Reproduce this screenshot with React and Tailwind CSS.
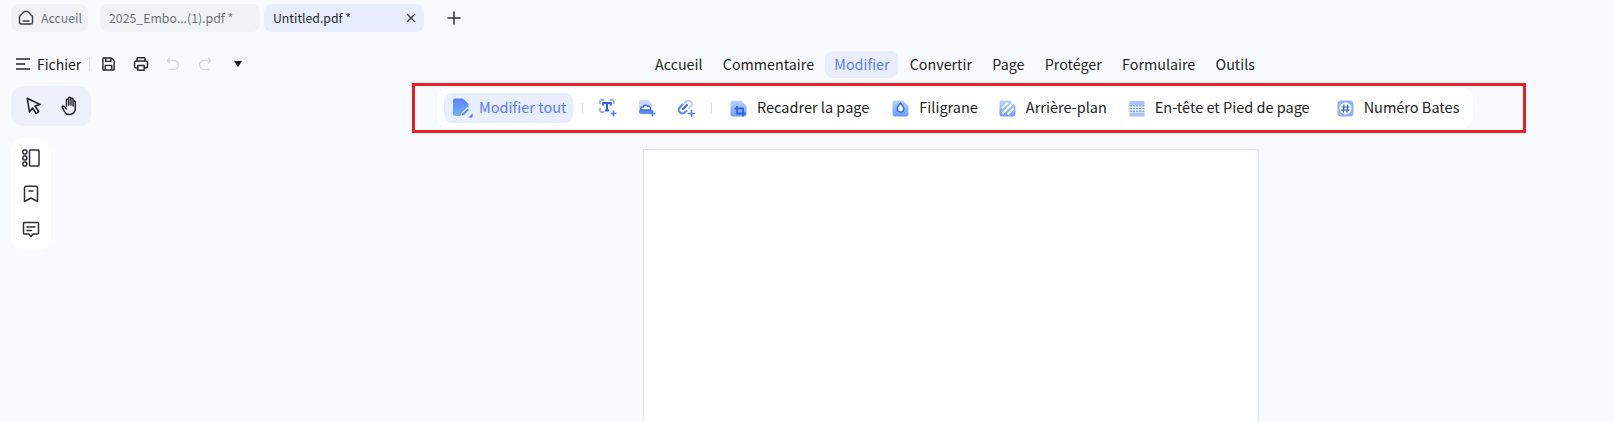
const FONT = "font-['Noto_Sans_CJK_SC','Noto_Sans',sans-serif]";

function HomeIcon() {
  return (
    <svg width="16" height="16" viewBox="0 0 16 16" fill="none" stroke="#3b3f46" strokeWidth="1.4" strokeLinejoin="round" strokeLinecap="round">
      <path d="M1.500 6.500 5.500 2.300c1.400-1.100 3.600-1.100 5 0l4 4.200v6c0 .9-.6 1.500-1.500 1.500H3c-.9 0-1.500-.6-1.500-1.500Z" />
      <path d="M5 11h6" />
    </svg>
  );
}

function Plus() {
  return (
    <svg width="16" height="16" viewBox="0 0 16 16" stroke="#2c2f36" strokeWidth="1.5">
      <path d="M8 1.500v13M1.500 8h13" />
    </svg>
  );
}

function Close() {
  return (
    <svg width="10" height="10" viewBox="0 0 10 10" stroke="#2c2f36" strokeWidth="1.200">
      <path d="M1 1l8 8M9 1 1 9" />
    </svg>
  );
}

function Menu() {
  return (
    <svg width="16" height="14" viewBox="0 0 16 14" stroke="#24272d" strokeWidth="1.500">
      <path d="M1 2h14M1 7h9M1 12h14" />
    </svg>
  );
}

function Save() {
  return (
    <svg width="15" height="16" viewBox="0 0 16 16" fill="none" stroke="#24272d" strokeWidth="1.500" strokeLinejoin="round">
      <path d="M2 2.500c0-.5.400-.9.900-.9H11l3 3v8.900c0 .5-.4.900-.9.900H2.900a.9.900 0 0 1-.9-.9Z" />
      <path d="M5 1.800v3.400h5.500V1.800M4.500 14.200V9.500h7v4.700" />
    </svg>
  );
}

function Printer() {
  return (
    <svg width="16" height="16" viewBox="0 0 16 16" fill="none" stroke="#24272d" strokeWidth="1.500" strokeLinejoin="round">
      <path d="M4 5V2.500c0-.5.300-.8.800-.8h6.400c.5 0 .8.300.8.800V5" />
      <rect x="1.500" y="5" width="13" height="7" rx="2" />
      <rect x="4.800" y="9.500" width="6.400" height="4.800" fill="#f9fafd" />
    </svg>
  );
}

function Undo({ flip }) {
  return (
    <svg width="14" height="14" viewBox="0 0 14 14" fill="none" stroke="#d5d7dc" strokeWidth="1.300" strokeLinecap="round" strokeLinejoin="round" className={flip ? "-scale-x-100" : ""}>
      <path d="M3.500 1 1.500 3.500 3.500 6" />
      <path d="M1.700 3.500H8a4.300 4.300 0 0 1 0 8.800H3" />
    </svg>
  );
}

function Pointer() {
  return (
    <svg width="15" height="18" viewBox="0 0 15 18" fill="none" stroke="#24272d" strokeWidth="1.600" strokeLinejoin="round">
      <path d="M1.200 1.200 14 7.500l-5 1.500 3.700 5.500-2.500 2-3.700-5.500L3.500 15Z" />
    </svg>
  );
}

function Hand() {
  return (
    <svg width="18" height="20" viewBox="0 0 18 20" fill="none" stroke="#24272d" strokeWidth="1.500" strokeLinecap="round" strokeLinejoin="round">
      <path d="M5.500 10V4a1.100 1.100 0 0 1 2.200 0v5M7.700 9V2.300a1.100 1.100 0 0 1 2.200 0V9M9.900 9V3.300a1.100 1.100 0 0 1 2.200 0V10M12.100 6a1.100 1.100 0 0 1 2.200 0v7a5.500 5.500 0 0 1-5.500 5.500H8c-2.200 0-3.300-1-4.300-2.700L1.300 11.500c-.5-1 .8-2.100 1.800-1.200L5.500 13" />
    </svg>
  );
}

function Pages() {
  return (
    <svg width="18" height="18" viewBox="0 0 18 18" fill="none" stroke="#2c2f36" strokeWidth="1.500">
      <rect x="7.500" y="1" width="9.500" height="16" rx="1" />
      <rect x="1" y="1" width="3.800" height="4" rx="1.200" />
      <rect x="1" y="7" width="3.800" height="4" rx="1.200" />
      <rect x="1" y="13" width="3.800" height="4" rx="1.200" />
    </svg>
  );
}

function Bookmark() {
  return (
    <svg width="16" height="18" viewBox="0 0 16 18" fill="none" stroke="#2c2f36" strokeWidth="1.500" strokeLinejoin="round">
      <path d="M1.500 3c0-1 .7-1.700 1.700-1.700h9.600c1 0 1.700.7 1.700 1.700v13.500L8 13l-6.500 3.500Z" />
      <path d="M5.500 6h5" />
    </svg>
  );
}

function Comment() {
  return (
    <svg width="18" height="18" viewBox="0 0 18 18" fill="none" stroke="#2c2f36" strokeWidth="1.500" strokeLinejoin="round" strokeLinecap="round">
      <path d="M2.500 1.500h13c.6 0 1 .4 1 1V12c0 .6-.4 1-1 1H11l-2 2.500L7 13H2.500c-.6 0-1-.4-1-1V2.500c0-.6.400-1 1-1Z" />
      <path d="M5 6h8M5 9.500h4.500" />
    </svg>
  );
}

function EditAll() {
  return (
    <svg width="21" height="20" viewBox="0 0 21 20">
      <defs>
        <linearGradient id="ea" x1="0" y1="0" x2="0" y2="1">
          <stop offset="0" stopColor="#5f80fb" />
          <stop offset="1" stopColor="#6cb2fb" />
        </linearGradient>
      </defs>
      <path d="M1 2.500C1 1.400 1.900.5 3 .5h8L16.500 6v3L9 18H3c-1.100 0-2-.9-2-2Z" fill="url(#ea)" />
      <path d="M9.500 15.500 15.500 9.800l2.600 2.200-6 5.600-3 .5Z" fill="#5f8bfb" stroke="#e8eefe" strokeWidth="1.200" />
      <path d="M20.500 15.500v4h-4Z" fill="#3f74f7" />
    </svg>
  );
}

function Corner() {
  return <path d="M14.500 11.500v6M11.500 14.500h6" stroke="#4f83f8" strokeWidth="1.700" />;
}

function AiText() {
  return (
    <svg width="19" height="18" viewBox="0 0 19 18" fill="none">
      <path d="M1 5V2.500C1 1.700 1.700 1 2.500 1H5M11 1h2.500c.8 0 1.500.7 1.500 1.500V5M1 9v2.500c0 .8.700 1.500 1.500 1.500H5" stroke="#8fb0fa" strokeWidth="1.800" />
      <path d="M4.200 6.500V4h7.600v2.500M8 4v7.500M6 11.500h4" stroke="#2f62e0" strokeWidth="2" />
      <Corner />
    </svg>
  );
}

function AiImage() {
  return (
    <svg width="19" height="18" viewBox="0 0 19 18" fill="none">
      <path d="M1 3a2 2 0 0 1 2-2h7l4 4v6H1Z" fill="#c9d9fd" />
      <path d="M1 11h13.500v2a2 2 0 0 1-2 2H3a2 2 0 0 1-2-2Z" fill="#5f8bfb" />
      <path d="M3 11c-1-2 .5-3.500 2-3 .5-2 3.500-2.500 4.500-.5 1-1 3.500 0 3 3.500Z" fill="#fff" stroke="#3568e0" strokeWidth="1.400" strokeLinejoin="round" />
      <Corner />
    </svg>
  );
}

function AiLink() {
  return (
    <svg width="19" height="18" viewBox="0 0 19 18" fill="none" strokeLinecap="round">
      <path d="M7.500 4 9.500 2.300a3.300 3.300 0 0 1 4.500 4.700L12 9" stroke="#bccffc" strokeWidth="2.200" />
      <path d="M5.500 5.500 2.800 8.200a3.600 3.600 0 0 0 5.200 5L9.500 12" stroke="#5f8bfb" strokeWidth="2.200" />
      <path d="M6 10 10 6" stroke="#2f62e0" strokeWidth="2" />
      <Corner />
    </svg>
  );
}

function Doc({ children, id }) {
  return (
    <svg width="17" height="17" viewBox="0 0 17 17" fill="none">
      <defs>
        <linearGradient id={id} x1="0" y1="0" x2="0" y2="1">
          <stop offset="0" stopColor="#bfd3fd" />
          <stop offset="1" stopColor="#6a9bfa" />
        </linearGradient>
      </defs>
      <path d="M.5 3a2.500 2.500 0 0 1 2.500-2.500h8L16.500 6v8a2.500 2.500 0 0 1-2.500 2.500H3A2.500 2.500 0 0 1 .5 14Z" fill={`url(#${id})`} />
      {children}
    </svg>
  );
}

function Crop() {
  return (
    <Doc id="crop">
      <path d="M7 6v7.500h8.500M4.500 8.500H13V16.500" stroke="#2f62e0" strokeWidth="1.800" />
    </Doc>
  );
}

function Drop() {
  return (
    <Doc id="drop">
      <path d="M8.500 3c2.200 2.800 3.300 4.300 3.300 5.800a3.300 3.300 0 0 1-6.600 0C5.200 7.300 6.300 5.800 8.500 3Z" fill="#fff" stroke="#2f6ef0" strokeWidth="1.500" />
    </Doc>
  );
}

function Stripes() {
  return (
    <Doc id="stripes">
      <path d="M3 8.500 8.500 3M3.500 13.500 13.500 3.500M8.500 14.500 14.500 8.500" stroke="#fff" strokeWidth="2" />
    </Doc>
  );
}

function HeaderFooter() {
  return (
    <svg width="16" height="17" viewBox="0 0 16 17">
      <rect x="0.500" y="1" width="15" height="4" fill="#a9c3fb" />
      <path d="M.5 5.800h15" stroke="#5f8bfb" strokeWidth="1.200" strokeDasharray="2.500 .7" />
      <path d="M.5 8.500h15" stroke="#5f8bfb" strokeWidth="1.200" strokeDasharray="2.500 .7" />
      <path d="M.5 11.200h15" stroke="#5f8bfb" strokeWidth="1.200" strokeDasharray="2.500 .7" />
      <rect x="0.500" y="12.500" width="15" height="4" fill="#a9c3fb" />
    </svg>
  );
}

function Hash() {
  return (
    <svg width="17" height="17" viewBox="0 0 17 17" fill="none">
      <rect x="0.500" y="0.500" width="16" height="16" rx="3.500" fill="#8fb0fa" />
      <circle cx="8.500" cy="8.500" r="6" fill="#fff" />
      <path d="M7 4.500 6.300 12.500M10.700 4.500 10 12.500M4.500 7h8M4.300 10.200h8" stroke="#2f62e0" strokeWidth="1.200" />
    </svg>
  );
}

function Tabs() {
  return (
    <div className="flex h-[36px] items-end pl-[11px] text-[12.3px]">
      <div className="mb-[4px] flex h-[28px] w-[77px] items-center gap-[7px] rounded-[8px] bg-[#f1f2f6] pl-[7px] text-[#70747d]">
        <HomeIcon />
        <span>Accueil</span>
      </div>
      <div className="mb-[4px] ml-[12px] flex h-[28px] w-[160px] items-center rounded-[8px] bg-[#f1f2f6] pl-[9px] text-[#70747d]">
        2025_Embo...(1).pdf *
      </div>
      <div className="mb-[4px] ml-[4px] flex h-[28px] w-[160px] items-center justify-between rounded-[8px] bg-[#e8eefe] pl-[9px] pr-[8px] text-[#24272d]">
        <span>Untitled.pdf *</span>
        <Close />
      </div>
      <div className="mb-[10px] ml-[22px] flex h-[16px] items-center">
        <Plus />
      </div>
    </div>
  );
}

function QuickBar() {
  return (
    <div className="flex h-[28px] items-center pl-[15px] text-[14px] text-[#1c1e23]">
      <Menu />
      <span className="ml-[6px]">Fichier</span>
      <span className="ml-[8px] h-[14px] w-px bg-[#d9dbe0]" />
      <span className="ml-[11px] flex"><Save /></span>
      <span className="ml-[17px] flex"><Printer /></span>
      <span className="ml-[17px] flex"><Undo /></span>
      <span className="ml-[18px] flex"><Undo flip /></span>
      <span className="ml-[22px] h-0 w-0 border-x-[4px] border-t-[6px] border-x-transparent border-t-[#1c1e23]" />
    </div>
  );
}

function Tool({ icon, label, gap = "ml-[10px]" }) {
  return (
    <div className="flex items-center">
      {icon}
      <span className={`${gap} pb-[2px]`}>{label}</span>
    </div>
  );
}

function MainNav() {
  const items = ["Accueil", "Commentaire", "Modifier", "Convertir", "Page", "Protéger", "Formulaire", "Outils"];
  return (
    <div className="flex h-[28px] w-[600px] items-center justify-between text-[14.3px] text-[#1c1e23]">
      {items.map((t) =>
        t === "Modifier" ? (
          <span key={t} className="-mx-[9px] flex h-[27px] items-center rounded-[8px] bg-[#e8eefe] px-[9px] text-[#5b7cfa]">{t}</span>
        ) : (
          <span key={t}>{t}</span>
        )
      )}
    </div>
  );
}

function EditBar() {
  return (
    <div className="flex h-[40px] w-[1036px] items-center rounded-[12px] bg-white pl-[7px] text-[14.5px] text-[#1c1e23]">
      <div className="flex h-[30px] w-[129px] items-center rounded-[8px] bg-[#e8eefe] pl-[8px] text-[#5b7cfa]">
        <EditAll />
        <span className="ml-[6px] pb-[2px]">Modifier tout</span>
      </div>
      <span className="ml-[9px] h-[10px] w-px bg-[#d4d6db]" />
      <span className="ml-[16px] flex"><AiText /></span>
      <span className="ml-[20px] flex"><AiImage /></span>
      <span className="ml-[20px] flex"><AiLink /></span>
      <span className="ml-[15px] h-[10px] w-px bg-[#d4d6db]" />
      <div className="ml-[18px]"><Tool icon={<Crop />} label="Recadrer la page" /></div>
      <div className="ml-[23px]"><Tool icon={<Drop />} label="Filigrane" /></div>
      <div className="ml-[21px]"><Tool icon={<Stripes />} label="Arrière-plan" /></div>
      <div className="ml-[22px]"><Tool icon={<HeaderFooter />} label="En-tête et Pied de page" /></div>
      <div className="ml-[27px]"><Tool icon={<Hash />} label="Numéro Bates" /></div>
    </div>
  );
}

export default function App() {
  return (
    <div className={`h-[422px] w-full overflow-hidden bg-[#f9fafd] ${FONT}`}>
      <Tabs />
      <div className="flex">
        <div className="w-[412px] shrink-0 pt-[14px]">
          <QuickBar />
          <div className="ml-[11px] mt-[8px] flex h-[40px] w-[80px] items-center rounded-[12px] bg-[#edf1fb] pl-[15px]">
            <Pointer />
            <span className="ml-[20px] flex"><Hand /></span>
          </div>
          <div className="ml-[11px] mt-[12px] flex h-[112px] w-[40px] flex-col items-center justify-between rounded-[12px] bg-white py-[11px]">
            <Pages />
            <Bookmark />
            <Comment />
          </div>
        </div>
        <div className="flex-1">
          <div className="ml-[243px] mt-[14px]">
            <MainNav />
          </div>
          <div className="mt-[5px] flex h-[50px] w-[1114px] items-center border-[3px] border-[#ed1c24] pl-[22px]">
            <EditBar />
          </div>
          <div className="ml-[231px] mt-[16px] h-[300px] w-[616px] border border-[#e4e6eb] bg-white" />
        </div>
      </div>
    </div>
  );
}
